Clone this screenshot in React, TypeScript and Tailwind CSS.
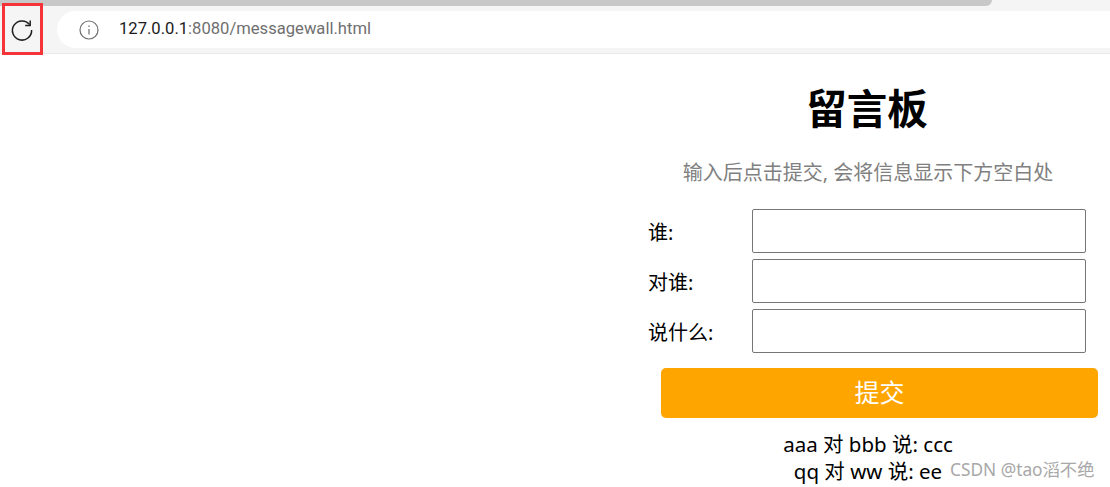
import React from 'react';

const font = "font-['Noto_Sans','Noto_Sans_CJK_SC',sans-serif]";

const fields = ['谁:', '对谁:', '说什么:'];
const messages = ['aaa 对 bbb 说: ccc', 'qq 对 ww 说: ee'];

const BrowserBar: React.FC = () => (
    <div className="h-[54px] bg-[#f5f5f5] border-b border-[#e8e8e8]">
        <div className="h-[6px] w-[992px] bg-[#c8c8c8] rounded-br-[10px]" />
        <div className="flex items-center h-[37px] mt-[5px]">
            <svg width="24" height="24" viewBox="0 0 24 24" fill="none" stroke="#1f1f1f" strokeWidth="1.5" className="ml-[10px]">
                <path d="M19.6 6.6A9.6 9.6 0 1 0 21.6 12" />
                <path d="M20.2 2.4v5h-5" />
            </svg>
            <div className="flex items-center flex-1 h-[37px] ml-[23px] pl-[22px] bg-white rounded-l-[19px]">
                <svg width="20" height="20" viewBox="0 0 20 20" fill="none" stroke="#6e6e6e" strokeWidth="1.2">
                    <circle cx="10" cy="10" r="9" />
                    <path d="M10 9v5.5M10 5.5v1.5" />
                </svg>
                <span className="ml-[20px] text-[16.6px] text-[#1a1a1a] font-['Roboto',sans-serif]">
                    127.0.0.1<span className="text-[#6f6f6f]">:8080/messagewall.html</span>
                </span>
            </div>
        </div>
    </div>
);

const App: React.FC = () => {
    return (
        <div className={`relative h-[487px] w-[1110px] overflow-hidden bg-white ${font}`}>
            <BrowserBar />
            <div className="absolute left-[2px] top-[3px] h-[52px] w-[41px] border-[3px] border-[#f5343a]" />

            <div className="ml-auto mr-[2px] w-[480px] flex flex-col items-center">
                <h1 className="mt-[25px] pr-[2px] text-[40.5px] leading-[60px] font-bold text-black">留言板</h1>
                <p className="mt-[20px] text-[20px] leading-[28px] text-[#808080]">输入后点击提交, 会将信息显示下方空白处</p>
                <div className="mt-[22px] w-full pl-[20px] flex flex-col gap-[6px]">
                    {fields.map((label) => (
                        <div key={label} className="flex items-center">
                            <label className="w-[104px] pt-[3px] text-[20px] text-black">{label}</label>
                            <input className="w-[334px] h-[44px] border border-[#767676] rounded-[2px] bg-white" />
                        </div>
                    ))}
                </div>
                <button className="mt-[15px] ml-[23px] w-[437px] h-[50px] bg-[#ffa500] rounded-[5px] text-white text-[25px]">提交</button>
                <div className="mt-[13px] text-center text-[20.5px] leading-[27px] text-black">
                    {messages.map((m) => (
                        <div key={m}>{m}</div>
                    ))}
                </div>
            </div>

            <div className="absolute left-[950px] top-[459px] text-[17.3px] leading-[22px] text-[#a8a8a8]">CSDN @tao滔不绝</div>
        </div>
    );
};

export default App;
